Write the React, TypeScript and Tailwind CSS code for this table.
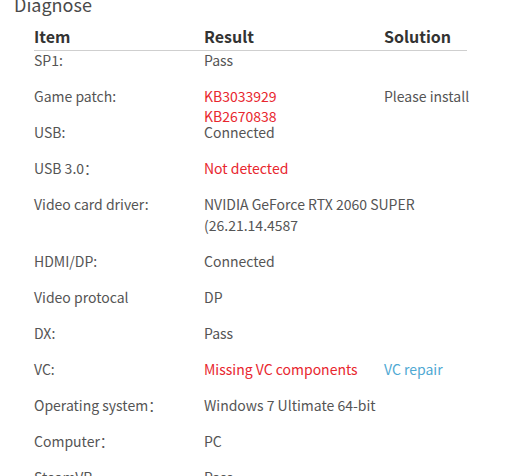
const font = { fontFamily: '"Noto Sans CJK SC", "Noto Sans", sans-serif' };

type Row = {
  item: string;
  result: string[];
  bad?: boolean;
  solution?: string;
  link?: boolean;
  tight?: boolean;
};

const rows: Row[] = [
  { item: 'SP1:', result: ['Pass'] },
  { item: 'Game patch:', result: ['KB3033929', 'KB2670838'], bad: true, solution: 'Please install', tight: true },
  { item: 'USB:', result: ['Connected'] },
  { item: 'USB 3.0：', result: ['Not detected'], bad: true },
  { item: 'Video card driver:', result: ['NVIDIA GeForce RTX 2060 SUPER', '(26.21.14.4587'] },
  { item: 'HDMI/DP:', result: ['Connected'] },
  { item: 'Video protocal', result: ['DP'] },
  { item: 'DX:', result: ['Pass'] },
  { item: 'VC:', result: ['Missing VC components'], bad: true, solution: 'VC repair', link: true },
  { item: 'Operating system：', result: ['Windows 7 Ultimate 64-bit'] },
  { item: 'Computer：', result: ['PC'] },
  { item: 'SteamVR', result: ['Pass'] },
];

export default function App() {
  return (
    <div className="w-[516px] h-[476px] overflow-hidden bg-white text-[#555]" style={font}>
      <h2 className="pl-[14px] -mt-[9px] text-[18px] leading-[26px] text-[#4a4a4a]">Diagnose</h2>
      <div className="ml-[34px] w-[433px]">
        {/* Header */}
        <div className="flex h-[34px] items-center border-b border-[#cfcfcf] pt-[4px] text-[16px] font-bold text-[#333]">
          <div className="w-[170px]">Item</div>
          <div className="w-[180px]">Result</div>
          <div>Solution</div>
        </div>

        <div className="-mt-[1px]">
          {rows.map((r) => (
            <div
              key={r.item}
              className={`flex text-[14px] leading-[21px] whitespace-nowrap ${r.tight ? 'h-[36px]' : 'pb-[15px]'}`}
            >
              <div className="w-[170px] shrink-0">{r.item}</div>
              <div className={`w-[180px] shrink-0 ${r.bad ? 'text-[#e8262e]' : ''}`}>
                {r.result.map((line) => (
                  <div key={line} className={r.tight ? 'leading-[20px]' : ''}>{line}</div>
                ))}
              </div>
              {r.solution && (
                <div className={r.link ? 'text-[#4fa9d3]' : ''}>{r.solution}</div>
              )}
            </div>
          ))}
        </div>
      </div>
    </div>
  );
}
